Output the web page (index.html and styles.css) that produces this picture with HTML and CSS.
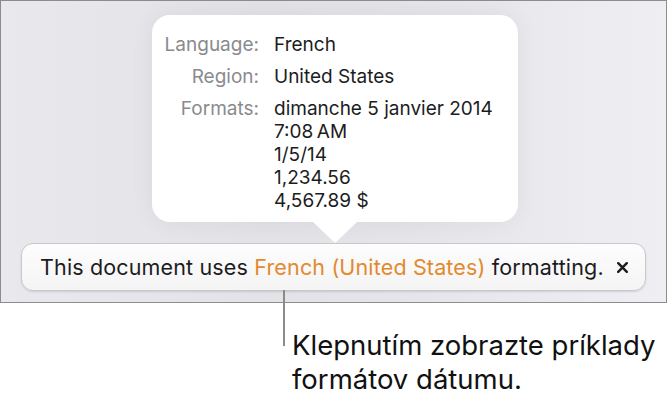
FILE: index.html
```html
<!DOCTYPE html>
<html lang="en">
<head>
<meta charset="utf-8">
<title>Formatting</title>
<link rel="stylesheet" href="styles.css">
</head>
<body>
<div class="frame">
  <div class="popover">
    <div class="info">
      <div class="label">Language:</div>
      <div class="value">French</div>
      <div class="label">Region:</div>
      <div class="value">United States</div>
      <div class="label">Formats:</div>
      <div class="value">dimanche 5 janvier 2014<br>7:08&#8239;AM<br>1/5/14<br>1,234.56<br>4,567.89 $</div>
    </div>
    <div class="arrow"></div>
  </div>
  <div class="bar">
    <span class="msg">This document uses <span class="accent">French (United States)</span> formatting.</span>
    <svg class="close" width="11" height="11" viewBox="0 0 11 11"><path d="M1.2 1.2 L9.8 9.8 M9.8 1.2 L1.2 9.8" stroke="#1c1c1e" stroke-width="2.4" stroke-linecap="round"/></svg>
  </div>
</div>
<div class="callout">
  <div class="leader"></div>
  <div class="note">Klepnutím zobrazte príklady<br>formátov dátumu.</div>
</div>
</body>
</html>
```
FILE: styles.css
```css
html, body {
  margin: 0;
  padding: 0;
  background: #ffffff;
}
body {
  font-family: Inter, "Noto Sans", sans-serif;
  width: 668px;
  height: 402px;
  overflow: hidden;
}
.frame {
  box-sizing: border-box;
  width: 667px;
  height: 303px;
  border: 1px solid #8c8c8c;
  background: linear-gradient(90deg, #e9e9ed 0%, #e3e3e7 40%, #e5e5e9 60%, #efeff3 100%);
  display: flex;
  flex-direction: column;
  align-items: flex-start;
}
.popover {
  position: relative;
  box-sizing: border-box;
  margin: 14px 0 0 151px;
  width: 366px;
  height: 207px;
  background: #ffffff;
  border-radius: 18px;
  box-shadow: 0 0 24px rgba(0, 0, 0, 0.06);
  padding: 18px 0 0 11px;
}
.info {
  display: grid;
  grid-template-columns: 96px auto;
  column-gap: 15px;
  row-gap: 9px;
  font-size: 19px;
  line-height: 23px;
}
.label {
  text-align: right;
  color: #8a8a8e;
}
.value {
  color: #1c1c1e;
}
.arrow {
  position: absolute;
  left: 161px;
  bottom: -21px;
  width: 0;
  height: 0;
  border-left: 22px solid transparent;
  border-right: 22px solid transparent;
  border-top: 21px solid #ffffff;
}
.bar {
  box-sizing: border-box;
  margin: 21px 0 0 20px;
  width: 625px;
  height: 48px;
  border: 1px solid #c9c9cc;
  border-radius: 12px;
  background: linear-gradient(180deg, #fdfdfd 0%, #f4f4f5 100%);
  box-shadow: 0 1px 2px rgba(0, 0, 0, 0.12);
  display: flex;
  align-items: center;
  padding: 0 10px 0 18px;
  gap: 13px;
  font-size: 21.5px;
  letter-spacing: 0.15px;
  color: #1c1c1e;
}
.msg {
  white-space: nowrap;
}
.accent {
  color: #e28a2d;
}
.close {
  flex: none;
}
.callout {
  display: flex;
  align-items: flex-start;
  margin: -13px 0 0 283px;
  gap: 7px;
}
.leader {
  width: 2px;
  height: 56px;
  background: #8a8a8a;
  flex: none;
}
.note {
  padding-top: 38px;
  font-size: 27.5px;
  line-height: 34px;
  color: #111111;
}
```
